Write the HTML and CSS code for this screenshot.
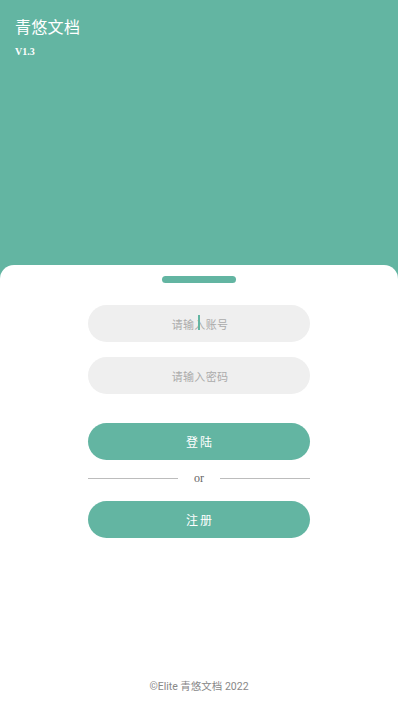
FILE: index.html
```html
<!DOCTYPE html>
<html lang="zh">
<head>
<meta charset="utf-8">
<link rel="stylesheet" href="styles.css">
</head>
<body>
<div class="app">
  <header class="top">
    <div class="title">青悠文档</div>
    <div class="version">V1.3</div>
  </header>
  <main class="sheet">
    <div class="handle"></div>
    <div class="form">
      <div class="field focused"><span class="ph">请输入账号</span><span class="caret"></span></div>
      <div class="field"><span class="ph">请输入密码</span></div>
      <button class="btn login">登陆</button>
      <div class="divider"><span class="line"></span><span class="or">or</span><span class="line"></span></div>
      <button class="btn register">注册</button>
    </div>
    <footer class="foot">©Elite 青悠文档 2022</footer>
  </main>
</div>
</body>
</html>
```
FILE: styles.css
```css
* { box-sizing: border-box; }
html, body { margin: 0; padding: 0; }
body {
  width: 398px;
  height: 708px;
  background: #63b5a2;
  font-family: "Noto Sans CJK SC", "Noto Sans", sans-serif;
  overflow: hidden;
}
.app {
  display: flex;
  flex-direction: column;
  height: 708px;
}
.top {
  height: 265px;
  padding: 14px 0 0 15px;
  color: #fff;
}
.title {
  font-size: 16px;
  line-height: 24px;
  letter-spacing: 0.3px;
}
.version {
  margin-top: 8px;
  font-family: "Liberation Serif", "DejaVu Serif", serif;
  font-weight: bold;
  font-size: 10px;
  line-height: 12px;
}
.sheet {
  flex: 1;
  background: #fff;
  border-radius: 14px 14px 0 0;
  display: flex;
  flex-direction: column;
  align-items: center;
  padding-top: 11px;
}
.handle {
  width: 74px;
  height: 7px;
  border-radius: 4px;
  background: #63b5a2;
}
.form {
  width: 222px;
  margin-top: 22px;
  display: flex;
  flex-direction: column;
}
.field {
  position: relative;
  height: 37px;
  border-radius: 19px;
  background: #efefef;
  display: flex;
  align-items: center;
  justify-content: center;
  margin-bottom: 15px;
}
.ph {
  color: #ababab;
  font-size: 11px;
  letter-spacing: 0.3px;
  padding-left: 2px;
}
.caret {
  position: absolute;
  left: 110px;
  top: 10px;
  width: 2px;
  height: 15px;
  background: #63b5a2;
}
.btn {
  height: 37px;
  border: none;
  border-radius: 19px;
  background: #63b5a2;
  color: #fff;
  font-family: "Noto Sans CJK SC", sans-serif;
  font-size: 12px;
  letter-spacing: 2px;
  padding: 0 0 0 2px;
}
.login { margin-top: 14px; }
.divider {
  height: 36px;
  display: flex;
  align-items: center;
}
.register { margin-top: 5px; }
.line {
  flex: 1;
  height: 1px;
  background: #bcbcbc;
}
.or {
  width: 42px;
  text-align: center;
  font-family: "Liberation Serif", "DejaVu Serif", serif;
  font-size: 12px;
  color: #666;
  line-height: 12px;
  padding-bottom: 1px;
}
.foot {
  margin-top: auto;
  margin-bottom: 15px;
  font-family: Roboto, "Noto Sans CJK SC", sans-serif;
  font-size: 10.5px;
  color: #888;
}
```
